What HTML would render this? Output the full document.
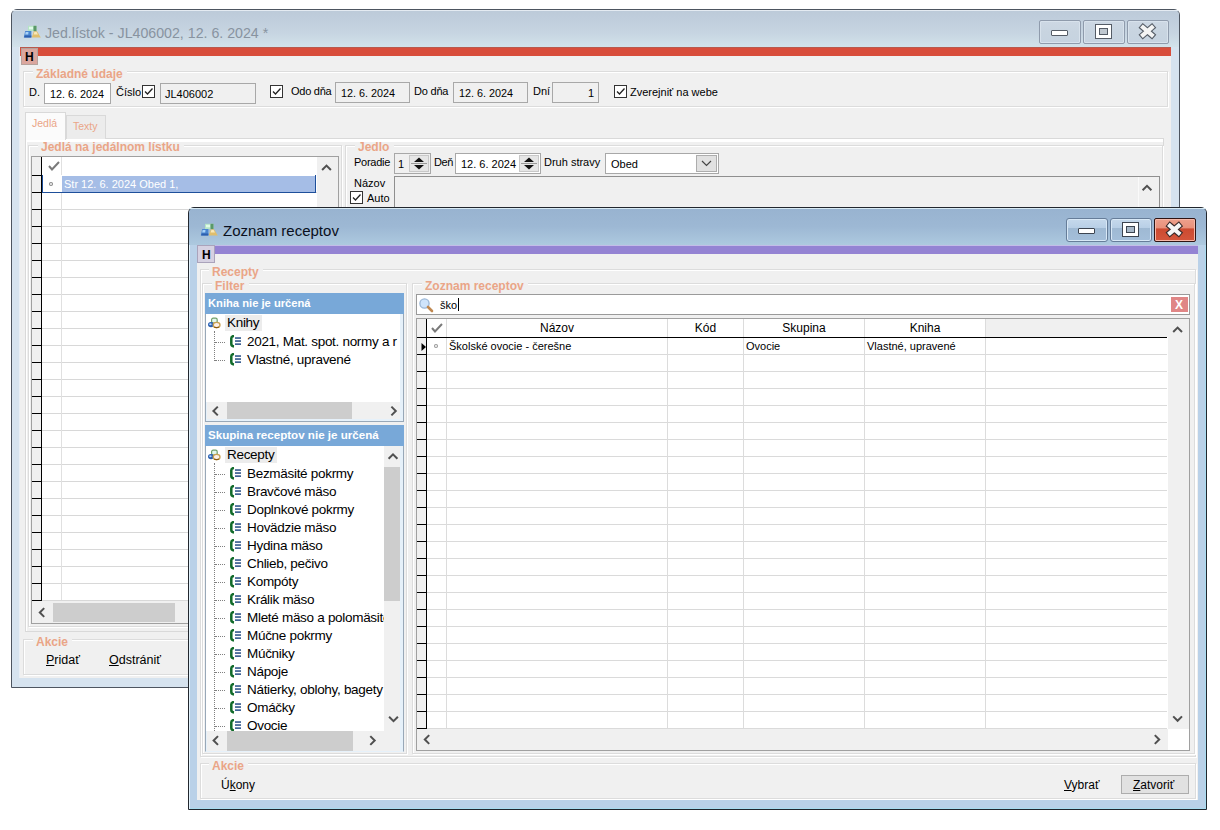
<!DOCTYPE html><html><head><meta charset="utf-8"><style>html,body{margin:0;padding:0;}body{width:1220px;height:830px;position:relative;overflow:hidden;background:#fff;font-family:"Liberation Sans", sans-serif;}div,span,svg{position:absolute;box-sizing:border-box;}span{white-space:nowrap;}u{text-decoration:underline;text-underline-offset:1px;}</style></head><body>
<div style="left:11px;top:9px;width:1169px;height:679px;border:1px solid #4d5560;border-radius:6px 6px 0 0;background:#d6e3ef;"></div>
<div style="left:12px;top:10px;width:1167px;height:37px;border-radius:5px 5px 0 0;background:linear-gradient(#bccad9,#c6d4e1 60%,#d2e2ea);"></div>
<div style="left:12px;top:10px;width:1167px;height:1px;background:#e4ebf2;border-radius:5px 5px 0 0;"></div>
<svg style="position:absolute;left:23px;top:25px;" width="20" height="14" viewBox="0 0 20 14"><rect x="5" y="0.8" width="8.5" height="5.4" fill="#b4e4c4"/><rect x="10.5" y="0.8" width="3" height="5.4" fill="#5a9868"/><rect x="6" y="1.8" width="4" height="2.5" fill="#e0fbe8"/><path d="M0.8 12.6 L2.2 6 L8.4 6 L8.4 12.6 Z" fill="#4a86d0"/><path d="M1.2 12.6 L8.4 12.6 L8.4 10.6 L1.6 10.6Z" fill="#2d5fae"/><path d="M2.6 7 L5.5 7 L5.2 9.5 L2.2 9.5Z" fill="#a8d2f8"/><path d="M8.8 12.6 L10.8 6.2 L14 6.2 L17.8 12.6 Z" fill="#e0be6c"/><path d="M10.6 9.5 L11.4 7 L13.6 7 L15 9.5Z" fill="#f8e8b8"/></svg>
<span style="left:45px;top:26px;font-size:14.2px;line-height:14.2px;color:#8893a0;font-weight:400;">Jed.lístok - JL406002, 12. 6. 2024 *</span>
<div style="left:1039px;top:20px;width:42px;height:24px;border:1px solid #8f9bac;border-radius:2px;background:linear-gradient(#cdd8e4,#c8d4e0 50%,#c6d3e0);box-shadow:inset 0 0 0 1px #d8e2ec;"></div>
<div style="left:1083px;top:20px;width:42px;height:24px;border:1px solid #8f9bac;border-radius:2px;background:linear-gradient(#cdd8e4,#c8d4e0 50%,#c6d3e0);box-shadow:inset 0 0 0 1px #d8e2ec;"></div>
<div style="left:1127px;top:20px;width:42px;height:24px;border:1px solid #8f9bac;border-radius:2px;background:linear-gradient(#cdd8e4,#c8d4e0 50%,#c6d3e0);box-shadow:inset 0 0 0 1px #d8e2ec;"></div>
<div style="left:1051px;top:30px;width:17px;height:6px;border:1px solid #555c66;background:#fff;border-radius:1px;"></div>
<div style="left:1095px;top:24px;width:17px;height:15px;border:1px solid #555c66;background:#fff;"></div>
<div style="left:1099px;top:28px;width:9px;height:7px;border:1px solid #555c66;background:#c0c8d0;"></div>
<svg style="position:absolute;left:1137px;top:22px;" width="22" height="20" viewBox="0 0 22 20"><path d="M6 5.4 L14.8 13 M14.8 5.4 L6 13" stroke="#555c66" stroke-width="6.4" stroke-linecap="square" stroke-linejoin="round"/><path d="M6 5.4 L14.8 13 M14.8 5.4 L6 13" stroke="#f4f4f4" stroke-width="4.2" stroke-linecap="square"/></svg>
<div style="left:20px;top:47px;width:1151px;height:631px;background:#f0f0f0;"></div>
<div style="left:19px;top:47px;width:1px;height:631px;background:#e8eef4;"></div>
<div style="left:20px;top:47px;width:1151px;height:9px;background:#d84d3b;border-top:1px solid #b85a4e;"></div>
<div style="left:21px;top:48px;width:17px;height:17px;background:#dba69e;border:1px solid #b6a29c;"></div>
<span style="left:25px;top:51px;font-size:12px;line-height:12px;color:#000;font-weight:700;">H</span>
<div style="left:23px;top:71px;width:1145px;height:36px;border:1px solid #dcdcdc;box-shadow:inset 1px 1px 0 #fff, 1px 1px 0 #fff;"></div>
<div style="left:33px;top:69px;width:94px;height:5px;background:#f0f0f0;"></div>
<span style="left:36px;top:68px;font-size:12px;line-height:12px;color:#eaa587;font-weight:700;">Základné údaje</span>
<span style="left:29px;top:87px;font-size:11px;line-height:11px;color:#000;font-weight:400;">D.</span>
<div style="left:44px;top:83px;width:67px;height:21px;border:1px solid #a8a8a8;background:#fff;"></div>
<span style="left:50px;top:89px;font-size:10.8px;line-height:10.8px;color:#000;font-weight:400;">12. 6. 2024</span>
<span style="left:116px;top:87px;font-size:11px;line-height:11px;color:#000;font-weight:400;">Číslo</span>
<div style="left:142px;top:85px;width:13px;height:13px;border:1px solid #333;background:#fff;"></div>
<svg style="position:absolute;left:142px;top:85px;" width="13" height="13" viewBox="0 0 13 13"><path d="M3 6.5 L5.5 9 L10.5 3.5" fill="none" stroke="#222" stroke-width="1.3"/></svg>
<div style="left:160px;top:83px;width:96px;height:21px;border:1px solid #a8a8a8;background:#f0f0f0;"></div>
<span style="left:165px;top:89px;font-size:11px;line-height:11px;color:#000;font-weight:400;">JL406002</span>
<div style="left:270px;top:85px;width:13px;height:13px;border:1px solid #333;background:#fff;"></div>
<svg style="position:absolute;left:270px;top:85px;" width="13" height="13" viewBox="0 0 13 13"><path d="M3 6.5 L5.5 9 L10.5 3.5" fill="none" stroke="#222" stroke-width="1.3"/></svg>
<span style="left:291px;top:86px;font-size:11px;line-height:11px;color:#000;font-weight:400;letter-spacing:-0.25px;">Odo dňa</span>
<div style="left:335px;top:82px;width:75px;height:21px;border:1px solid #a8a8a8;background:#f0f0f0;"></div>
<span style="left:341px;top:88px;font-size:10.8px;line-height:10.8px;color:#000;font-weight:400;">12. 6. 2024</span>
<span style="left:414px;top:86px;font-size:11px;line-height:11px;color:#000;font-weight:400;letter-spacing:-0.2px;">Do dňa</span>
<div style="left:453px;top:82px;width:75px;height:21px;border:1px solid #a8a8a8;background:#f0f0f0;"></div>
<span style="left:459px;top:88px;font-size:10.8px;line-height:10.8px;color:#000;font-weight:400;">12. 6. 2024</span>
<span style="left:533px;top:86px;font-size:11px;line-height:11px;color:#000;font-weight:400;">Dní</span>
<div style="left:552px;top:82px;width:47px;height:21px;border:1px solid #a8a8a8;background:#f0f0f0;"></div>
<span style="left:588px;top:88px;font-size:11px;line-height:11px;color:#000;font-weight:400;">1</span>
<div style="left:614px;top:85px;width:13px;height:13px;border:1px solid #333;background:#fff;"></div>
<svg style="position:absolute;left:614px;top:85px;" width="13" height="13" viewBox="0 0 13 13"><path d="M3 6.5 L5.5 9 L10.5 3.5" fill="none" stroke="#222" stroke-width="1.3"/></svg>
<span style="left:630px;top:87px;font-size:11px;line-height:11px;color:#000;font-weight:400;">Zverejniť na webe</span>
<div style="left:25px;top:138px;width:1139px;height:494px;border:1px solid #d9d9d9;background:#f0f0f0;box-shadow:inset 1px 1px 0 #fff;"></div>
<div style="left:26px;top:139px;width:1137px;height:3px;background:#fff;"></div>
<div style="left:66px;top:115px;width:40px;height:24px;border:1px solid #d9d9d9;border-bottom:none;background:#ececec;"></div>
<span style="left:73px;top:121px;font-size:10.5px;line-height:10.5px;color:#eaa587;font-weight:400;">Texty</span>
<div style="left:25px;top:112px;width:41px;height:28px;border:1px solid #d9d9d9;border-bottom:none;background:#fbfbfb;"></div>
<span style="left:32px;top:118px;font-size:10.5px;line-height:10.5px;color:#eaa587;font-weight:400;">Jedlá</span>
<div style="left:28px;top:145px;width:314px;height:482px;border:1px solid #dcdcdc;box-shadow:inset 1px 1px 0 #fff, 1px 1px 0 #fff;"></div>
<div style="left:38px;top:143px;width:146px;height:5px;background:#f0f0f0;"></div>
<span style="left:41px;top:141px;font-size:12px;line-height:12px;color:#eaa587;font-weight:700;">Jedlá na jedálnom lístku</span>
<div style="left:31px;top:156px;width:308px;height:468px;border:1px solid #a0a0a0;background:#fff;"></div>
<div style="left:32px;top:157px;width:10px;height:443px;background:#f0f0f0;"></div>
<div style="left:41px;top:157px;width:1px;height:444px;background:#000;"></div>
<div style="left:32px;top:175px;width:10px;height:1px;background:#000;"></div>
<div style="left:32px;top:192px;width:10px;height:1px;background:#000;"></div>
<div style="left:32px;top:209px;width:10px;height:1px;background:#000;"></div>
<div style="left:32px;top:226px;width:10px;height:1px;background:#000;"></div>
<div style="left:32px;top:243px;width:10px;height:1px;background:#000;"></div>
<div style="left:32px;top:260px;width:10px;height:1px;background:#000;"></div>
<div style="left:32px;top:277px;width:10px;height:1px;background:#000;"></div>
<div style="left:32px;top:294px;width:10px;height:1px;background:#000;"></div>
<div style="left:32px;top:311px;width:10px;height:1px;background:#000;"></div>
<div style="left:32px;top:328px;width:10px;height:1px;background:#000;"></div>
<div style="left:32px;top:345px;width:10px;height:1px;background:#000;"></div>
<div style="left:32px;top:362px;width:10px;height:1px;background:#000;"></div>
<div style="left:32px;top:379px;width:10px;height:1px;background:#000;"></div>
<div style="left:32px;top:396px;width:10px;height:1px;background:#000;"></div>
<div style="left:32px;top:413px;width:10px;height:1px;background:#000;"></div>
<div style="left:32px;top:430px;width:10px;height:1px;background:#000;"></div>
<div style="left:32px;top:447px;width:10px;height:1px;background:#000;"></div>
<div style="left:32px;top:464px;width:10px;height:1px;background:#000;"></div>
<div style="left:32px;top:481px;width:10px;height:1px;background:#000;"></div>
<div style="left:32px;top:498px;width:10px;height:1px;background:#000;"></div>
<div style="left:32px;top:515px;width:10px;height:1px;background:#000;"></div>
<div style="left:32px;top:532px;width:10px;height:1px;background:#000;"></div>
<div style="left:32px;top:549px;width:10px;height:1px;background:#000;"></div>
<div style="left:32px;top:566px;width:10px;height:1px;background:#000;"></div>
<div style="left:32px;top:583px;width:10px;height:1px;background:#000;"></div>
<div style="left:32px;top:600px;width:10px;height:1px;background:#000;"></div>
<div style="left:42px;top:192px;width:275px;height:1px;background:#d8d8d8;"></div>
<div style="left:42px;top:209px;width:275px;height:1px;background:#d8d8d8;"></div>
<div style="left:42px;top:226px;width:275px;height:1px;background:#d8d8d8;"></div>
<div style="left:42px;top:243px;width:275px;height:1px;background:#d8d8d8;"></div>
<div style="left:42px;top:260px;width:275px;height:1px;background:#d8d8d8;"></div>
<div style="left:42px;top:277px;width:275px;height:1px;background:#d8d8d8;"></div>
<div style="left:42px;top:294px;width:275px;height:1px;background:#d8d8d8;"></div>
<div style="left:42px;top:311px;width:275px;height:1px;background:#d8d8d8;"></div>
<div style="left:42px;top:328px;width:275px;height:1px;background:#d8d8d8;"></div>
<div style="left:42px;top:345px;width:275px;height:1px;background:#d8d8d8;"></div>
<div style="left:42px;top:362px;width:275px;height:1px;background:#d8d8d8;"></div>
<div style="left:42px;top:379px;width:275px;height:1px;background:#d8d8d8;"></div>
<div style="left:42px;top:396px;width:275px;height:1px;background:#d8d8d8;"></div>
<div style="left:42px;top:413px;width:275px;height:1px;background:#d8d8d8;"></div>
<div style="left:42px;top:430px;width:275px;height:1px;background:#d8d8d8;"></div>
<div style="left:42px;top:447px;width:275px;height:1px;background:#d8d8d8;"></div>
<div style="left:42px;top:464px;width:275px;height:1px;background:#d8d8d8;"></div>
<div style="left:42px;top:481px;width:275px;height:1px;background:#d8d8d8;"></div>
<div style="left:42px;top:498px;width:275px;height:1px;background:#d8d8d8;"></div>
<div style="left:42px;top:515px;width:275px;height:1px;background:#d8d8d8;"></div>
<div style="left:42px;top:532px;width:275px;height:1px;background:#d8d8d8;"></div>
<div style="left:42px;top:549px;width:275px;height:1px;background:#d8d8d8;"></div>
<div style="left:42px;top:566px;width:275px;height:1px;background:#d8d8d8;"></div>
<div style="left:42px;top:583px;width:275px;height:1px;background:#d8d8d8;"></div>
<div style="left:42px;top:600px;width:275px;height:1px;background:#d8d8d8;"></div>
<div style="left:61px;top:157px;width:1px;height:443px;background:#e0e0e0;"></div>
<div style="left:42px;top:175px;width:274px;height:1px;background:#000;"></div>
<svg style="position:absolute;left:47px;top:160px;" width="14" height="12" viewBox="0 0 14 12"><path d="M2 6 L5 9.5 L12 2" fill="none" stroke="#7a7a7a" stroke-width="2"/></svg>
<div style="left:42px;top:175px;width:274px;height:18px;border:1px solid #1e4f9a;border-top:none;background:#fff;"></div>
<div style="left:62px;top:176px;width:253px;height:16px;background:#a5bde6;"></div>
<svg style="position:absolute;left:48px;top:181px;" width="6" height="6" viewBox="0 0 6 6"><circle cx="3" cy="3" r="1.5" fill="none" stroke="#888" stroke-width="1.1"/></svg>
<span style="left:64px;top:179px;font-size:11px;line-height:11px;color:#fff;font-weight:400;">Str 12. 6. 2024 Obed 1,</span>
<div style="left:317px;top:157px;width:21px;height:443px;background:#f0f0f0;"></div>
<svg style="position:absolute;left:317px;top:157px;" width="21" height="22" viewBox="0 0 21 22"><path d="M5.1 13.0 L9.5 8.600000000000001 L13.9 13.0" fill="none" stroke="#505050" stroke-width="2"/></svg>
<div style="left:32px;top:601px;width:306px;height:22px;background:#f0f0f0;"></div>
<div style="left:53px;top:603px;width:122px;height:19px;background:#cdcdcd;"></div>
<svg style="position:absolute;left:32px;top:601px;" width="21" height="22" viewBox="0 0 21 22"><path d="M12.2 7.1 L7.8 11.5 L12.2 15.9" fill="none" stroke="#505050" stroke-width="2"/></svg>
<div style="left:345px;top:145px;width:818px;height:495px;border:1px solid #dcdcdc;box-shadow:inset 1px 1px 0 #fff, 1px 1px 0 #fff;"></div>
<div style="left:355px;top:143px;width:39px;height:5px;background:#f0f0f0;"></div>
<span style="left:358px;top:141px;font-size:12px;line-height:12px;color:#eaa587;font-weight:700;">Jedlo</span>
<span style="left:354px;top:157px;font-size:11px;line-height:11px;color:#000;font-weight:400;letter-spacing:-0.25px;">Poradie</span>
<div style="left:394px;top:153px;width:37px;height:21px;border:1px solid #a8a8a8;background:#f0f0f0;"></div>
<span style="left:398px;top:159px;font-size:11px;line-height:11px;color:#000;font-weight:400;">1</span>
<div style="left:409px;top:155px;width:20px;height:17px;background:#e6e6e6;border:1px solid #c8c8c8;"></div>
<svg style="position:absolute;left:409px;top:155px;" width="20" height="17" viewBox="0 0 20 17"><path d="M5 7 L10 2.5 L15 7Z M5 10 L10 14.5 L15 10Z" fill="#111"/><path d="M2 8.5 H18" stroke="#999" stroke-width="1"/></svg>
<span style="left:434px;top:157px;font-size:11px;line-height:11px;color:#000;font-weight:400;letter-spacing:-0.4px;">Deň</span>
<div style="left:455px;top:153px;width:86px;height:21px;border:1px solid #a8a8a8;background:#fff;"></div>
<span style="left:461px;top:159px;font-size:11px;line-height:11px;color:#000;font-weight:400;">12. 6. 2024</span>
<div style="left:519px;top:155px;width:20px;height:17px;background:#e6e6e6;border:1px solid #c8c8c8;"></div>
<svg style="position:absolute;left:519px;top:155px;" width="20" height="17" viewBox="0 0 20 17"><path d="M5 7 L10 2.5 L15 7Z M5 10 L10 14.5 L15 10Z" fill="#111"/><path d="M2 8.5 H18" stroke="#999" stroke-width="1"/></svg>
<span style="left:544px;top:157px;font-size:11px;line-height:11px;color:#000;font-weight:400;">Druh stravy</span>
<div style="left:605px;top:153px;width:114px;height:21px;border:1px solid #a8a8a8;background:#fff;"></div>
<span style="left:611px;top:159px;font-size:11px;line-height:11px;color:#000;font-weight:400;">Obed</span>
<div style="left:696px;top:155px;width:21px;height:17px;border:1px solid #adadad;background:#e1e1e1;"></div>
<svg style="position:absolute;left:696px;top:155px;" width="21" height="17" viewBox="0 0 21 17"><path d="M6 6 L10.5 10.5 L15 6" fill="none" stroke="#444" stroke-width="1.2"/></svg>
<span style="left:354px;top:178px;font-size:11px;line-height:11px;color:#000;font-weight:400;">Názov</span>
<div style="left:350px;top:191px;width:13px;height:13px;border:1px solid #333;background:#fff;"></div>
<svg style="position:absolute;left:350px;top:191px;" width="13" height="13" viewBox="0 0 13 13"><path d="M3 6.5 L5.5 9 L10.5 3.5" fill="none" stroke="#222" stroke-width="1.3"/></svg>
<span style="left:367px;top:193px;font-size:11px;line-height:11px;color:#000;font-weight:400;">Auto</span>
<div style="left:394px;top:176px;width:766px;height:84px;border:1px solid #8f8f8f;background:#f0f0f0;"></div>
<div style="left:1138px;top:177px;width:21px;height:83px;background:#f0f0f0;border-left:1px solid #fafafa;"></div>
<svg style="position:absolute;left:1138px;top:177px;" width="21" height="22" viewBox="0 0 21 22"><path d="M4.6 13.2 L9 8.8 L13.4 13.2" fill="none" stroke="#505050" stroke-width="2"/></svg>
<div style="left:23px;top:639px;width:1145px;height:36px;border:1px solid #dcdcdc;box-shadow:inset 1px 1px 0 #fff, 1px 1px 0 #fff;"></div>
<div style="left:33px;top:637px;width:39px;height:5px;background:#f0f0f0;"></div>
<span style="left:36px;top:636px;font-size:12px;line-height:12px;color:#eaa587;font-weight:700;">Akcie</span>
<span style="left:46px;top:654px;font-size:12.5px;line-height:12.5px;color:#000;font-weight:400;"><u>P</u>ridať</span>
<span style="left:109px;top:654px;font-size:12.5px;line-height:12.5px;color:#000;font-weight:400;"><u>O</u>dstrániť</span>
<div style="left:188px;top:207px;width:1019px;height:603px;border:1px solid #22272e;border-radius:6px 6px 0 0;background:#bad1e8;box-shadow:inset 1px 0 0 #e2f2fc, inset -1px -1px 0 #a8dcf0;"></div>
<div style="left:189px;top:208px;width:1017px;height:37px;border-radius:5px 5px 0 0;background:linear-gradient(#98b3d0,#9db8d4 50%,#adc9df);"></div>
<div style="left:189px;top:208px;width:1017px;height:1px;background:#d8eaf4;border-radius:5px 5px 0 0;"></div>
<svg style="position:absolute;left:200px;top:223px;" width="20" height="14" viewBox="0 0 20 14"><rect x="5" y="0.8" width="8.5" height="5.4" fill="#b4e4c4"/><rect x="10.5" y="0.8" width="3" height="5.4" fill="#5a9868"/><rect x="6" y="1.8" width="4" height="2.5" fill="#e0fbe8"/><path d="M0.8 12.6 L2.2 6 L8.4 6 L8.4 12.6 Z" fill="#4a86d0"/><path d="M1.2 12.6 L8.4 12.6 L8.4 10.6 L1.6 10.6Z" fill="#2d5fae"/><path d="M2.6 7 L5.5 7 L5.2 9.5 L2.2 9.5Z" fill="#a8d2f8"/><path d="M8.8 12.6 L10.8 6.2 L14 6.2 L17.8 12.6 Z" fill="#e0be6c"/><path d="M10.6 9.5 L11.4 7 L13.6 7 L15 9.5Z" fill="#f8e8b8"/></svg>
<span style="left:223px;top:223px;font-size:15px;line-height:15px;color:#0a1020;font-weight:400;">Zoznam receptov</span>
<div style="left:1066px;top:218px;width:42px;height:24px;border:1px solid #667d99;border-radius:3px;background:linear-gradient(#c6d9ec 0%,#b8cfe6 40%,#9fb9d3 42%,#a4bfda 100%);box-shadow:inset 0 0 0 1px #d8e8f6;"></div>
<div style="left:1110px;top:218px;width:42px;height:24px;border:1px solid #667d99;border-radius:3px;background:linear-gradient(#c6d9ec 0%,#b8cfe6 40%,#9fb9d3 42%,#a4bfda 100%);box-shadow:inset 0 0 0 1px #d8e8f6;"></div>
<div style="left:1078px;top:228px;width:17px;height:6px;border:1px solid #3c4450;background:#fff;border-radius:1px;"></div>
<div style="left:1122px;top:222px;width:17px;height:15px;border:1px solid #3c4450;background:#fff;"></div>
<div style="left:1126px;top:226px;width:9px;height:7px;border:1px solid #3c4450;background:#a8b8c8;"></div>
<div style="left:1154px;top:218px;width:42px;height:24px;border:1px solid #2e1414;border-radius:2px;background:linear-gradient(#eea08c 0%,#e8907a 42%,#cc4a30 44%,#d4563c 100%);box-shadow:inset 0 0 0 1px #f6b8a8;"></div>
<svg style="position:absolute;left:1164px;top:220px;" width="22" height="20" viewBox="0 0 22 20"><path d="M6 5.8 L14.6 13 M14.6 5.8 L6 13" stroke="#3a2a2a" stroke-width="6.4" stroke-linecap="square"/><path d="M6 5.8 L14.6 13 M14.6 5.8 L6 13" stroke="#f6f6f6" stroke-width="4.2" stroke-linecap="square"/></svg>
<div style="left:197px;top:245px;width:1001px;height:555px;background:#f0f0f0;"></div>
<div style="left:197px;top:245px;width:1001px;height:9px;background:#9483d3;border-top:1px solid #c4bce8;"></div>
<div style="left:197px;top:245px;width:18px;height:18px;background:#d6d1e2;border:1px solid #aaa3bb;"></div>
<span style="left:202px;top:249px;font-size:12px;line-height:12px;color:#000;font-weight:700;">H</span>
<div style="left:200px;top:269px;width:996px;height:488px;border:1px solid #dcdcdc;box-shadow:inset 1px 1px 0 #fff, 1px 1px 0 #fff;"></div>
<div style="left:209px;top:267px;width:54px;height:5px;background:#f0f0f0;"></div>
<span style="left:212px;top:266px;font-size:12px;line-height:12px;color:#eaa587;font-weight:700;">Recepty</span>
<div style="left:202px;top:283px;width:205px;height:471px;border:1px solid #dcdcdc;box-shadow:inset 1px 1px 0 #fff, 1px 1px 0 #fff;"></div>
<div style="left:212px;top:281px;width:37px;height:5px;background:#f0f0f0;"></div>
<span style="left:215px;top:280px;font-size:12px;line-height:12px;color:#eaa587;font-weight:700;">Filter</span>
<div style="left:205px;top:293px;width:199px;height:129px;border:1px solid #98a8b8;background:#fff;"></div>
<div style="left:206px;top:402px;width:197px;height:19px;background:#e6f1fa;"></div>
<div style="left:205px;top:293px;width:199px;height:21px;background:#78a8d8;"></div>
<span style="left:208px;top:298px;font-size:11.2px;line-height:11.2px;color:#fff;font-weight:700;">Kniha nie je určená</span>
<svg style="position:absolute;left:207px;top:317px;" width="14" height="12" viewBox="0 0 14 12"><rect x="4.6" y="1.2" width="5.6" height="5" rx="1.6" fill="#e4f8f0" stroke="#6f9e68" stroke-width="1.2"/><ellipse cx="4" cy="7.6" rx="3" ry="2.6" fill="#2a5eb0"/><ellipse cx="3.4" cy="7.2" rx="1.3" ry="1" fill="#a8d4ff"/><ellipse cx="9.6" cy="8" rx="3.4" ry="2.6" fill="#fdf0e8" stroke="#c8a050" stroke-width="1.3"/><path d="M7.2 10 Q9.6 11.4 12 10" stroke="#8a5a10" stroke-width="1.3" fill="none"/></svg>
<div style="left:225px;top:315px;width:37px;height:16px;background:#ececec;"></div>
<span style="left:227px;top:316px;font-size:13.5px;line-height:13.5px;color:#000;font-weight:400;letter-spacing:-0.3px;">Knihy</span>
<div style="left:214px;top:331px;width:1px;height:30px;border-left:1px dotted #808080;"></div>
<div style="left:215px;top:342px;width:10px;height:1px;border-top:1px dotted #808080;"></div>
<svg style="position:absolute;left:230px;top:335px;" width="12" height="13" viewBox="0 0 12 13"><path d="M4 1 Q1.3 1.2 1.3 3.2 L1.3 9 Q1.3 11.2 4 11.5" fill="none" stroke="#116b2a" stroke-width="2.5"/><rect x="5" y="2.2" width="6" height="1.7" fill="#3d6293"/><rect x="5" y="5.2" width="6" height="1.7" fill="#3d6293"/><rect x="5" y="8.3" width="6" height="1.7" fill="#3d6293"/></svg>
<span style="left:247px;top:335px;font-size:13.5px;line-height:13.5px;color:#000;font-weight:400;letter-spacing:-0.3px;">2021, Mat. spot. normy a r</span>
<div style="left:215px;top:360px;width:10px;height:1px;border-top:1px dotted #808080;"></div>
<svg style="position:absolute;left:230px;top:353px;" width="12" height="13" viewBox="0 0 12 13"><path d="M4 1 Q1.3 1.2 1.3 3.2 L1.3 9 Q1.3 11.2 4 11.5" fill="none" stroke="#116b2a" stroke-width="2.5"/><rect x="5" y="2.2" width="6" height="1.7" fill="#3d6293"/><rect x="5" y="5.2" width="6" height="1.7" fill="#3d6293"/><rect x="5" y="8.3" width="6" height="1.7" fill="#3d6293"/></svg>
<span style="left:247px;top:353px;font-size:13.5px;line-height:13.5px;color:#000;font-weight:400;letter-spacing:-0.3px;">Vlastné, upravené</span>
<div style="left:400px;top:314px;width:3px;height:107px;background:#e6f1fa;"></div>
<div style="left:207px;top:402px;width:193px;height:17px;background:#f0f0f0;"></div>
<div style="left:227px;top:402px;width:125px;height:17px;background:#cdcdcd;"></div>
<svg style="position:absolute;left:207px;top:402px;" width="18" height="17" viewBox="0 0 18 17"><path d="M10.8 4.6 L6.3999999999999995 9 L10.8 13.4" fill="none" stroke="#505050" stroke-width="2"/></svg>
<svg style="position:absolute;left:384px;top:402px;" width="18" height="17" viewBox="0 0 18 17"><path d="M7.3999999999999995 4.6 L11.8 9 L7.3999999999999995 13.4" fill="none" stroke="#505050" stroke-width="2"/></svg>
<div style="left:205px;top:425px;width:199px;height:327px;border:1px solid #98a8b8;border-bottom-color:#e6f1fa;background:#fff;"></div>
<div style="left:205px;top:425px;width:199px;height:21px;background:#78a8d8;"></div>
<span style="left:208px;top:429px;font-size:11.6px;line-height:11.6px;color:#fff;font-weight:700;">Skupina receptov nie je určená</span>
<svg style="position:absolute;left:207px;top:449px;" width="14" height="12" viewBox="0 0 14 12"><rect x="4.6" y="1.2" width="5.6" height="5" rx="1.6" fill="#e4f8f0" stroke="#6f9e68" stroke-width="1.2"/><ellipse cx="4" cy="7.6" rx="3" ry="2.6" fill="#2a5eb0"/><ellipse cx="3.4" cy="7.2" rx="1.3" ry="1" fill="#a8d4ff"/><ellipse cx="9.6" cy="8" rx="3.4" ry="2.6" fill="#fdf0e8" stroke="#c8a050" stroke-width="1.3"/><path d="M7.2 10 Q9.6 11.4 12 10" stroke="#8a5a10" stroke-width="1.3" fill="none"/></svg>
<div style="left:225px;top:447px;width:52px;height:16px;background:#ececec;"></div>
<span style="left:227px;top:448px;font-size:13.5px;line-height:13.5px;color:#000;font-weight:400;letter-spacing:-0.3px;">Recepty</span>
<div style="left:214px;top:463px;width:1px;height:268px;border-left:1px dotted #808080;"></div>
<div style="left:215px;top:474px;width:10px;height:1px;border-top:1px dotted #808080;"></div>
<svg style="position:absolute;left:230px;top:467px;" width="12" height="13" viewBox="0 0 12 13"><path d="M4 1 Q1.3 1.2 1.3 3.2 L1.3 9 Q1.3 11.2 4 11.5" fill="none" stroke="#116b2a" stroke-width="2.5"/><rect x="5" y="2.2" width="6" height="1.7" fill="#3d6293"/><rect x="5" y="5.2" width="6" height="1.7" fill="#3d6293"/><rect x="5" y="8.3" width="6" height="1.7" fill="#3d6293"/></svg>
<span style="left:247px;top:467px;font-size:13.5px;line-height:13.5px;color:#000;font-weight:400;letter-spacing:-0.3px;">Bezmäsité pokrmy</span>
<div style="left:215px;top:492px;width:10px;height:1px;border-top:1px dotted #808080;"></div>
<svg style="position:absolute;left:230px;top:485px;" width="12" height="13" viewBox="0 0 12 13"><path d="M4 1 Q1.3 1.2 1.3 3.2 L1.3 9 Q1.3 11.2 4 11.5" fill="none" stroke="#116b2a" stroke-width="2.5"/><rect x="5" y="2.2" width="6" height="1.7" fill="#3d6293"/><rect x="5" y="5.2" width="6" height="1.7" fill="#3d6293"/><rect x="5" y="8.3" width="6" height="1.7" fill="#3d6293"/></svg>
<span style="left:247px;top:485px;font-size:13.5px;line-height:13.5px;color:#000;font-weight:400;letter-spacing:-0.3px;">Bravčové mäso</span>
<div style="left:215px;top:510px;width:10px;height:1px;border-top:1px dotted #808080;"></div>
<svg style="position:absolute;left:230px;top:503px;" width="12" height="13" viewBox="0 0 12 13"><path d="M4 1 Q1.3 1.2 1.3 3.2 L1.3 9 Q1.3 11.2 4 11.5" fill="none" stroke="#116b2a" stroke-width="2.5"/><rect x="5" y="2.2" width="6" height="1.7" fill="#3d6293"/><rect x="5" y="5.2" width="6" height="1.7" fill="#3d6293"/><rect x="5" y="8.3" width="6" height="1.7" fill="#3d6293"/></svg>
<span style="left:247px;top:503px;font-size:13.5px;line-height:13.5px;color:#000;font-weight:400;letter-spacing:-0.3px;">Doplnkové pokrmy</span>
<div style="left:215px;top:528px;width:10px;height:1px;border-top:1px dotted #808080;"></div>
<svg style="position:absolute;left:230px;top:521px;" width="12" height="13" viewBox="0 0 12 13"><path d="M4 1 Q1.3 1.2 1.3 3.2 L1.3 9 Q1.3 11.2 4 11.5" fill="none" stroke="#116b2a" stroke-width="2.5"/><rect x="5" y="2.2" width="6" height="1.7" fill="#3d6293"/><rect x="5" y="5.2" width="6" height="1.7" fill="#3d6293"/><rect x="5" y="8.3" width="6" height="1.7" fill="#3d6293"/></svg>
<span style="left:247px;top:521px;font-size:13.5px;line-height:13.5px;color:#000;font-weight:400;letter-spacing:-0.3px;">Hovädzie mäso</span>
<div style="left:215px;top:546px;width:10px;height:1px;border-top:1px dotted #808080;"></div>
<svg style="position:absolute;left:230px;top:539px;" width="12" height="13" viewBox="0 0 12 13"><path d="M4 1 Q1.3 1.2 1.3 3.2 L1.3 9 Q1.3 11.2 4 11.5" fill="none" stroke="#116b2a" stroke-width="2.5"/><rect x="5" y="2.2" width="6" height="1.7" fill="#3d6293"/><rect x="5" y="5.2" width="6" height="1.7" fill="#3d6293"/><rect x="5" y="8.3" width="6" height="1.7" fill="#3d6293"/></svg>
<span style="left:247px;top:539px;font-size:13.5px;line-height:13.5px;color:#000;font-weight:400;letter-spacing:-0.3px;">Hydina mäso</span>
<div style="left:215px;top:564px;width:10px;height:1px;border-top:1px dotted #808080;"></div>
<svg style="position:absolute;left:230px;top:557px;" width="12" height="13" viewBox="0 0 12 13"><path d="M4 1 Q1.3 1.2 1.3 3.2 L1.3 9 Q1.3 11.2 4 11.5" fill="none" stroke="#116b2a" stroke-width="2.5"/><rect x="5" y="2.2" width="6" height="1.7" fill="#3d6293"/><rect x="5" y="5.2" width="6" height="1.7" fill="#3d6293"/><rect x="5" y="8.3" width="6" height="1.7" fill="#3d6293"/></svg>
<span style="left:247px;top:557px;font-size:13.5px;line-height:13.5px;color:#000;font-weight:400;letter-spacing:-0.3px;">Chlieb, pečivo</span>
<div style="left:215px;top:582px;width:10px;height:1px;border-top:1px dotted #808080;"></div>
<svg style="position:absolute;left:230px;top:575px;" width="12" height="13" viewBox="0 0 12 13"><path d="M4 1 Q1.3 1.2 1.3 3.2 L1.3 9 Q1.3 11.2 4 11.5" fill="none" stroke="#116b2a" stroke-width="2.5"/><rect x="5" y="2.2" width="6" height="1.7" fill="#3d6293"/><rect x="5" y="5.2" width="6" height="1.7" fill="#3d6293"/><rect x="5" y="8.3" width="6" height="1.7" fill="#3d6293"/></svg>
<span style="left:247px;top:575px;font-size:13.5px;line-height:13.5px;color:#000;font-weight:400;letter-spacing:-0.3px;">Kompóty</span>
<div style="left:215px;top:600px;width:10px;height:1px;border-top:1px dotted #808080;"></div>
<svg style="position:absolute;left:230px;top:593px;" width="12" height="13" viewBox="0 0 12 13"><path d="M4 1 Q1.3 1.2 1.3 3.2 L1.3 9 Q1.3 11.2 4 11.5" fill="none" stroke="#116b2a" stroke-width="2.5"/><rect x="5" y="2.2" width="6" height="1.7" fill="#3d6293"/><rect x="5" y="5.2" width="6" height="1.7" fill="#3d6293"/><rect x="5" y="8.3" width="6" height="1.7" fill="#3d6293"/></svg>
<span style="left:247px;top:593px;font-size:13.5px;line-height:13.5px;color:#000;font-weight:400;letter-spacing:-0.3px;">Králik mäso</span>
<div style="left:215px;top:618px;width:10px;height:1px;border-top:1px dotted #808080;"></div>
<svg style="position:absolute;left:230px;top:611px;" width="12" height="13" viewBox="0 0 12 13"><path d="M4 1 Q1.3 1.2 1.3 3.2 L1.3 9 Q1.3 11.2 4 11.5" fill="none" stroke="#116b2a" stroke-width="2.5"/><rect x="5" y="2.2" width="6" height="1.7" fill="#3d6293"/><rect x="5" y="5.2" width="6" height="1.7" fill="#3d6293"/><rect x="5" y="8.3" width="6" height="1.7" fill="#3d6293"/></svg>
<span style="left:247px;top:611px;font-size:13.5px;line-height:13.5px;color:#000;font-weight:400;letter-spacing:-0.3px;">Mleté mäso a polomäsité</span>
<div style="left:215px;top:636px;width:10px;height:1px;border-top:1px dotted #808080;"></div>
<svg style="position:absolute;left:230px;top:629px;" width="12" height="13" viewBox="0 0 12 13"><path d="M4 1 Q1.3 1.2 1.3 3.2 L1.3 9 Q1.3 11.2 4 11.5" fill="none" stroke="#116b2a" stroke-width="2.5"/><rect x="5" y="2.2" width="6" height="1.7" fill="#3d6293"/><rect x="5" y="5.2" width="6" height="1.7" fill="#3d6293"/><rect x="5" y="8.3" width="6" height="1.7" fill="#3d6293"/></svg>
<span style="left:247px;top:629px;font-size:13.5px;line-height:13.5px;color:#000;font-weight:400;letter-spacing:-0.3px;">Múčne pokrmy</span>
<div style="left:215px;top:654px;width:10px;height:1px;border-top:1px dotted #808080;"></div>
<svg style="position:absolute;left:230px;top:647px;" width="12" height="13" viewBox="0 0 12 13"><path d="M4 1 Q1.3 1.2 1.3 3.2 L1.3 9 Q1.3 11.2 4 11.5" fill="none" stroke="#116b2a" stroke-width="2.5"/><rect x="5" y="2.2" width="6" height="1.7" fill="#3d6293"/><rect x="5" y="5.2" width="6" height="1.7" fill="#3d6293"/><rect x="5" y="8.3" width="6" height="1.7" fill="#3d6293"/></svg>
<span style="left:247px;top:647px;font-size:13.5px;line-height:13.5px;color:#000;font-weight:400;letter-spacing:-0.3px;">Múčniky</span>
<div style="left:215px;top:672px;width:10px;height:1px;border-top:1px dotted #808080;"></div>
<svg style="position:absolute;left:230px;top:665px;" width="12" height="13" viewBox="0 0 12 13"><path d="M4 1 Q1.3 1.2 1.3 3.2 L1.3 9 Q1.3 11.2 4 11.5" fill="none" stroke="#116b2a" stroke-width="2.5"/><rect x="5" y="2.2" width="6" height="1.7" fill="#3d6293"/><rect x="5" y="5.2" width="6" height="1.7" fill="#3d6293"/><rect x="5" y="8.3" width="6" height="1.7" fill="#3d6293"/></svg>
<span style="left:247px;top:665px;font-size:13.5px;line-height:13.5px;color:#000;font-weight:400;letter-spacing:-0.3px;">Nápoje</span>
<div style="left:215px;top:690px;width:10px;height:1px;border-top:1px dotted #808080;"></div>
<svg style="position:absolute;left:230px;top:683px;" width="12" height="13" viewBox="0 0 12 13"><path d="M4 1 Q1.3 1.2 1.3 3.2 L1.3 9 Q1.3 11.2 4 11.5" fill="none" stroke="#116b2a" stroke-width="2.5"/><rect x="5" y="2.2" width="6" height="1.7" fill="#3d6293"/><rect x="5" y="5.2" width="6" height="1.7" fill="#3d6293"/><rect x="5" y="8.3" width="6" height="1.7" fill="#3d6293"/></svg>
<span style="left:247px;top:683px;font-size:13.5px;line-height:13.5px;color:#000;font-weight:400;letter-spacing:-0.3px;">Nátierky, oblohy, bagety</span>
<div style="left:215px;top:708px;width:10px;height:1px;border-top:1px dotted #808080;"></div>
<svg style="position:absolute;left:230px;top:701px;" width="12" height="13" viewBox="0 0 12 13"><path d="M4 1 Q1.3 1.2 1.3 3.2 L1.3 9 Q1.3 11.2 4 11.5" fill="none" stroke="#116b2a" stroke-width="2.5"/><rect x="5" y="2.2" width="6" height="1.7" fill="#3d6293"/><rect x="5" y="5.2" width="6" height="1.7" fill="#3d6293"/><rect x="5" y="8.3" width="6" height="1.7" fill="#3d6293"/></svg>
<span style="left:247px;top:701px;font-size:13.5px;line-height:13.5px;color:#000;font-weight:400;letter-spacing:-0.3px;">Omáčky</span>
<div style="left:215px;top:726px;width:10px;height:1px;border-top:1px dotted #808080;"></div>
<svg style="position:absolute;left:230px;top:719px;" width="12" height="13" viewBox="0 0 12 13"><path d="M4 1 Q1.3 1.2 1.3 3.2 L1.3 9 Q1.3 11.2 4 11.5" fill="none" stroke="#116b2a" stroke-width="2.5"/><rect x="5" y="2.2" width="6" height="1.7" fill="#3d6293"/><rect x="5" y="5.2" width="6" height="1.7" fill="#3d6293"/><rect x="5" y="8.3" width="6" height="1.7" fill="#3d6293"/></svg>
<span style="left:247px;top:719px;font-size:13.5px;line-height:13.5px;color:#000;font-weight:400;letter-spacing:-0.3px;">Ovocie</span>
<div style="left:384px;top:446px;width:19px;height:305px;background:#e6f1fa;"></div>
<div style="left:384px;top:446px;width:16px;height:285px;background:#f0f0f0;"></div>
<div style="left:384px;top:467px;width:16px;height:134px;background:#cdcdcd;"></div>
<svg style="position:absolute;left:384px;top:446px;" width="16" height="20" viewBox="0 0 16 20"><path d="M4.6 12.7 L9 8.3 L13.4 12.7" fill="none" stroke="#505050" stroke-width="2"/></svg>
<svg style="position:absolute;left:384px;top:709px;" width="16" height="20" viewBox="0 0 16 20"><path d="M5.1 7.8 L9.5 12.2 L13.9 7.8" fill="none" stroke="#505050" stroke-width="2"/></svg>
<div style="left:206px;top:731px;width:1px;height:20px;background:#e6f1fa;"></div>
<div style="left:207px;top:731px;width:193px;height:20px;background:#f0f0f0;"></div>
<div style="left:227px;top:731px;width:126px;height:20px;background:#cdcdcd;"></div>
<svg style="position:absolute;left:207px;top:731px;" width="18" height="20" viewBox="0 0 18 20"><path d="M11.0 5.1 L6.6000000000000005 9.5 L11.0 13.9" fill="none" stroke="#505050" stroke-width="2"/></svg>
<svg style="position:absolute;left:362px;top:731px;" width="20" height="20" viewBox="0 0 20 20"><path d="M8.3 5.1 L12.7 9.5 L8.3 13.9" fill="none" stroke="#505050" stroke-width="2"/></svg>
<div style="left:412px;top:283px;width:783px;height:471px;border:1px solid #dcdcdc;box-shadow:inset 1px 1px 0 #fff, 1px 1px 0 #fff;"></div>
<div style="left:422px;top:281px;width:106px;height:5px;background:#f0f0f0;"></div>
<span style="left:425px;top:280px;font-size:12px;line-height:12px;color:#eaa587;font-weight:700;">Zoznam receptov</span>
<div style="left:416px;top:294px;width:774px;height:21px;border:1px solid #9a9a9a;background:#fff;"></div>
<svg style="position:absolute;left:418px;top:297px;" width="16" height="16" viewBox="0 0 16 16"><circle cx="6.5" cy="6.5" r="4.6" fill="#cfe4fb" stroke="#9ab6d6" stroke-width="1.3"/><path d="M10 10 L14 14" stroke="#c08850" stroke-width="2.6" stroke-linecap="round"/></svg>
<span style="left:440px;top:300px;font-size:11px;line-height:11px;color:#000;font-weight:400;">ško</span>
<div style="left:458px;top:298px;width:1px;height:13px;background:#000;"></div>
<div style="left:1171px;top:297px;width:17px;height:15px;background:#e08686;"></div>
<span style="left:1175px;top:299px;font-size:12px;line-height:12px;color:#fff;font-weight:700;">X</span>
<div style="left:416px;top:318px;width:774px;height:433px;border:1px solid #a0a0a0;background:#fff;"></div>
<div style="left:417px;top:319px;width:751px;height:18px;background:#fff;"></div>
<div style="left:986px;top:319px;width:182px;height:18px;background:#f0f0f0;"></div>
<div style="left:417px;top:319px;width:9px;height:409px;background:#f0f0f0;"></div>
<div style="left:426px;top:319px;width:1px;height:410px;background:#000;"></div>
<div style="left:417px;top:337px;width:10px;height:1px;background:#000;"></div>
<div style="left:417px;top:354px;width:10px;height:1px;background:#000;"></div>
<div style="left:417px;top:371px;width:10px;height:1px;background:#000;"></div>
<div style="left:417px;top:388px;width:10px;height:1px;background:#000;"></div>
<div style="left:417px;top:405px;width:10px;height:1px;background:#000;"></div>
<div style="left:417px;top:422px;width:10px;height:1px;background:#000;"></div>
<div style="left:417px;top:439px;width:10px;height:1px;background:#000;"></div>
<div style="left:417px;top:456px;width:10px;height:1px;background:#000;"></div>
<div style="left:417px;top:473px;width:10px;height:1px;background:#000;"></div>
<div style="left:417px;top:490px;width:10px;height:1px;background:#000;"></div>
<div style="left:417px;top:507px;width:10px;height:1px;background:#000;"></div>
<div style="left:417px;top:524px;width:10px;height:1px;background:#000;"></div>
<div style="left:417px;top:541px;width:10px;height:1px;background:#000;"></div>
<div style="left:417px;top:558px;width:10px;height:1px;background:#000;"></div>
<div style="left:417px;top:575px;width:10px;height:1px;background:#000;"></div>
<div style="left:417px;top:592px;width:10px;height:1px;background:#000;"></div>
<div style="left:417px;top:609px;width:10px;height:1px;background:#000;"></div>
<div style="left:417px;top:626px;width:10px;height:1px;background:#000;"></div>
<div style="left:417px;top:643px;width:10px;height:1px;background:#000;"></div>
<div style="left:417px;top:660px;width:10px;height:1px;background:#000;"></div>
<div style="left:417px;top:677px;width:10px;height:1px;background:#000;"></div>
<div style="left:417px;top:694px;width:10px;height:1px;background:#000;"></div>
<div style="left:417px;top:711px;width:10px;height:1px;background:#000;"></div>
<div style="left:417px;top:728px;width:10px;height:1px;background:#000;"></div>
<div style="left:427px;top:354px;width:740px;height:1px;background:#dadada;"></div>
<div style="left:427px;top:371px;width:740px;height:1px;background:#dadada;"></div>
<div style="left:427px;top:388px;width:740px;height:1px;background:#dadada;"></div>
<div style="left:427px;top:405px;width:740px;height:1px;background:#dadada;"></div>
<div style="left:427px;top:422px;width:740px;height:1px;background:#dadada;"></div>
<div style="left:427px;top:439px;width:740px;height:1px;background:#dadada;"></div>
<div style="left:427px;top:456px;width:740px;height:1px;background:#dadada;"></div>
<div style="left:427px;top:473px;width:740px;height:1px;background:#dadada;"></div>
<div style="left:427px;top:490px;width:740px;height:1px;background:#dadada;"></div>
<div style="left:427px;top:507px;width:740px;height:1px;background:#dadada;"></div>
<div style="left:427px;top:524px;width:740px;height:1px;background:#dadada;"></div>
<div style="left:427px;top:541px;width:740px;height:1px;background:#dadada;"></div>
<div style="left:427px;top:558px;width:740px;height:1px;background:#dadada;"></div>
<div style="left:427px;top:575px;width:740px;height:1px;background:#dadada;"></div>
<div style="left:427px;top:592px;width:740px;height:1px;background:#dadada;"></div>
<div style="left:427px;top:609px;width:740px;height:1px;background:#dadada;"></div>
<div style="left:427px;top:626px;width:740px;height:1px;background:#dadada;"></div>
<div style="left:427px;top:643px;width:740px;height:1px;background:#dadada;"></div>
<div style="left:427px;top:660px;width:740px;height:1px;background:#dadada;"></div>
<div style="left:427px;top:677px;width:740px;height:1px;background:#dadada;"></div>
<div style="left:427px;top:694px;width:740px;height:1px;background:#dadada;"></div>
<div style="left:427px;top:711px;width:740px;height:1px;background:#dadada;"></div>
<div style="left:427px;top:728px;width:740px;height:1px;background:#dadada;"></div>
<div style="left:446px;top:319px;width:1px;height:409px;background:#dcdcdc;"></div>
<div style="left:667px;top:319px;width:1px;height:409px;background:#dcdcdc;"></div>
<div style="left:743px;top:319px;width:1px;height:409px;background:#dcdcdc;"></div>
<div style="left:864px;top:319px;width:1px;height:409px;background:#dcdcdc;"></div>
<div style="left:985px;top:319px;width:1px;height:409px;background:#dcdcdc;"></div>
<div style="left:427px;top:337px;width:740px;height:1px;background:#000;"></div>
<svg style="position:absolute;left:430px;top:322px;" width="14" height="12" viewBox="0 0 14 12"><path d="M2 6 L5 9.5 L12 2" fill="none" stroke="#7a7a7a" stroke-width="2"/></svg>
<span style="left:447px;width:220px;text-align:center;top:322px;font-size:12px;line-height:12px;color:#000;font-weight:400;">Názov</span>
<span style="left:668px;width:75px;text-align:center;top:322px;font-size:12px;line-height:12px;color:#000;font-weight:400;">Kód</span>
<span style="left:744px;width:120px;text-align:center;top:322px;font-size:12px;line-height:12px;color:#000;font-weight:400;">Skupina</span>
<span style="left:865px;width:120px;text-align:center;top:322px;font-size:12px;line-height:12px;color:#000;font-weight:400;">Kniha</span>
<svg style="position:absolute;left:420px;top:341px;" width="7" height="12" viewBox="0 0 7 12"><path d="M1.5 2 L6 6 L1.5 10Z" fill="#000"/></svg>
<svg style="position:absolute;left:433px;top:343px;" width="6" height="6" viewBox="0 0 6 6"><circle cx="3" cy="3" r="1.5" fill="none" stroke="#999" stroke-width="1.1"/></svg>
<span style="left:449px;top:341px;font-size:11px;line-height:11px;color:#000;font-weight:400;">Školské ovocie - čerešne</span>
<span style="left:746px;top:341px;font-size:11px;line-height:11px;color:#000;font-weight:400;">Ovocie</span>
<span style="left:867px;top:341px;font-size:11px;line-height:11px;color:#000;font-weight:400;">Vlastné, upravené</span>
<div style="left:1168px;top:319px;width:21px;height:410px;background:#f0f0f0;"></div>
<svg style="position:absolute;left:1168px;top:319px;" width="21" height="22" viewBox="0 0 21 22"><path d="M5.199999999999999 13.0 L9.6 8.600000000000001 L14.0 13.0" fill="none" stroke="#505050" stroke-width="2"/></svg>
<svg style="position:absolute;left:1168px;top:707px;" width="21" height="22" viewBox="0 0 21 22"><path d="M5.199999999999999 9.399999999999999 L9.6 13.8 L14.0 9.399999999999999" fill="none" stroke="#505050" stroke-width="2"/></svg>
<div style="left:417px;top:729px;width:751px;height:21px;background:#f0f0f0;"></div>
<div style="left:1168px;top:729px;width:21px;height:21px;background:#fff;"></div>
<svg style="position:absolute;left:417px;top:729px;" width="21" height="21" viewBox="0 0 21 21"><path d="M12.2 6.1 L7.8 10.5 L12.2 14.9" fill="none" stroke="#505050" stroke-width="2"/></svg>
<svg style="position:absolute;left:1146px;top:729px;" width="21" height="21" viewBox="0 0 21 21"><path d="M8.8 6.1 L13.2 10.5 L8.8 14.9" fill="none" stroke="#505050" stroke-width="2"/></svg>
<div style="left:200px;top:763px;width:996px;height:36px;border:1px solid #dcdcdc;box-shadow:inset 1px 1px 0 #fff, 1px 1px 0 #fff;"></div>
<div style="left:209px;top:761px;width:39px;height:5px;background:#f0f0f0;"></div>
<span style="left:212px;top:760px;font-size:12px;line-height:12px;color:#eaa587;font-weight:700;">Akcie</span>
<span style="left:221px;top:779px;font-size:12px;line-height:12px;color:#000;font-weight:400;">Ú<u>k</u>ony</span>
<span style="left:1064px;top:779px;font-size:12px;line-height:12px;color:#000;font-weight:400;"><u>V</u>ybrať</span>
<div style="left:1121px;top:775px;width:68px;height:19px;border:1px solid #adadad;background:#e1e1e1;"></div>
<span style="left:1133px;top:779px;font-size:12px;line-height:12px;color:#000;font-weight:400;"><u>Z</u>atvoriť</span>
</body></html>
